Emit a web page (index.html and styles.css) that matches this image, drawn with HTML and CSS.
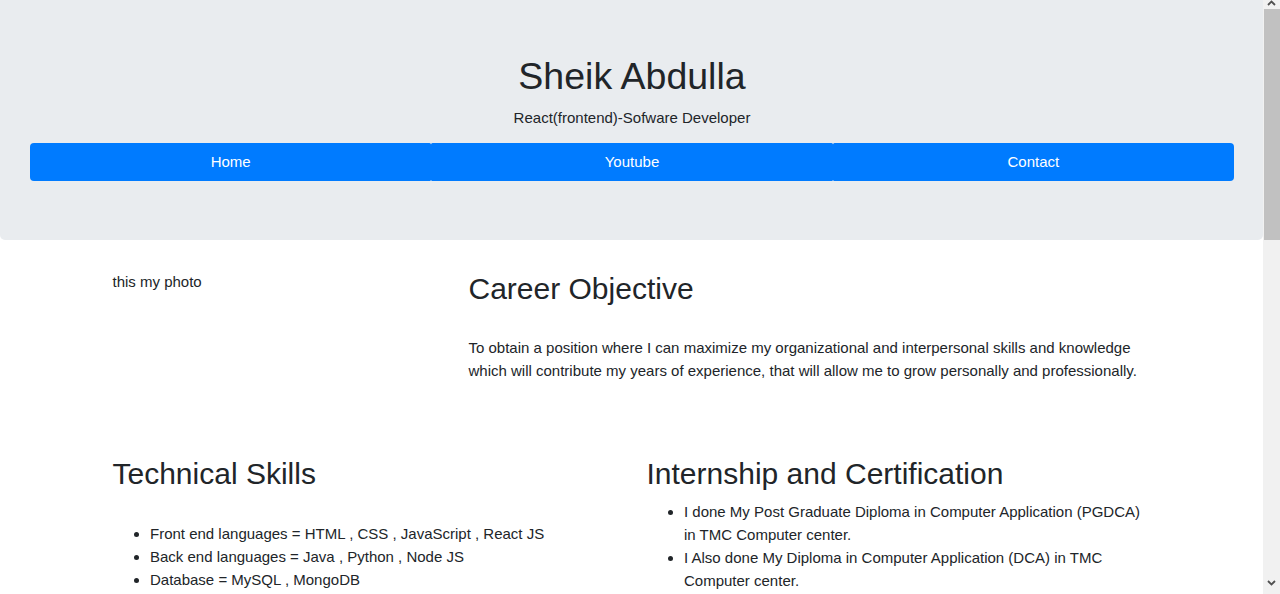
FILE: index.html
```html
<!DOCTYPE html>
<html lang="en">
<head>
<meta charset="utf-8">
<title>Sheik Abdulla</title>
<link rel="stylesheet" href="styles.css">
</head>
<body>
<div class="page">
  <header class="jumbotron">
    <h1 class="name">Sheik Abdulla</h1>
    <p class="role">React(frontend)-Sofware Developer</p>
    <nav class="btn-group">
      <a class="btn" href="#">Home</a>
      <a class="btn" href="#">Youtube</a>
      <a class="btn" href="#">Contact</a>
    </nav>
  </header>

  <section class="row row-top">
    <div class="col col-4">
      <p class="photo">this my photo</p>
    </div>
    <div class="col col-8">
      <h2>Career Objective</h2>
      <br>
      <p>To obtain a position where I can maximize my organizational and interpersonal skills and knowledge which will contribute my years of experience, that will allow me to grow personally and professionally.</p>
    </div>
  </section>

  <section class="row row-bottom">
    <div class="col col-6">
      <h2>Technical Skills</h2>
      <br>
      <ul>
        <li>Front end languages = HTML , CSS , JavaScript , React JS</li>
        <li>Back end languages = Java , Python , Node JS</li>
        <li>Database = MySQL , MongoDB</li>
      </ul>
    </div>
    <div class="col col-6">
      <h2>Internship and Certification</h2>
      <ul>
        <li>I done My Post Graduate Diploma in Computer Application (PGDCA) in TMC Computer center.</li>
        <li>I Also done My Diploma in Computer Application (DCA) in TMC Computer center.</li>
      </ul>
    </div>
  </section>
</div>
<aside class="scrollbar">
  <div class="sb-btn sb-up">
    <svg width="9" height="6" viewBox="0 0 9 6"><path d="M1 5 L4.5 1.5 L8 5" fill="none" stroke="#505050" stroke-width="1.8"/></svg>
  </div>
  <div class="sb-thumb"></div>
  <div class="sb-track"></div>
  <div class="sb-btn sb-down">
    <svg width="9" height="6" viewBox="0 0 9 6"><path d="M1 1 L4.5 4.5 L8 1" fill="none" stroke="#505050" stroke-width="1.8"/></svg>
  </div>
</aside>
</body>
</html>
```

FILE: styles.css
```css
* { box-sizing: border-box; }

html, body {
  margin: 0;
  height: 594px;
  overflow: hidden;
}

body {
  display: flex;
  font-family: "Liberation Sans", Arial, sans-serif;
  font-size: 15px;
  line-height: 22.5px;
  color: #212529;
  background: #fff;
}

.page {
  flex: 1;
  min-width: 0;
  overflow: hidden;
}

.jumbotron {
  background: #e9ecef;
  height: 240px;
  padding: 54px 29px 0 30px;
  border-radius: 0 0 5px 5px;
  text-align: center;
}

.name {
  margin: 0 0 7.5px;
  font-size: 37.5px;
  line-height: 45px;
  font-weight: 400;
}

.role {
  margin: 0 0 14px;
}

.btn-group {
  display: flex;
}

.btn {
  flex: 1;
  display: block;
  height: 38px;
  line-height: 38px;
  background: #007bff;
  color: #fff;
  text-decoration: none;
  font-size: 15px;
  border-radius: 1.5px;
}

.btn:first-child { border-radius: 4px 1.5px 1.5px 4px; }
.btn:last-child { border-radius: 1.5px 4px 4px 1.5px; }

.row {
  display: flex;
  width: 1068px;
  margin-left: 97.5px;
}

.row-top { margin-top: 31px; }
.row-bottom { margin-top: 59px; }

.col { padding: 0 15px; }
.col-4 { width: 356px; }
.col-8 { width: 712px; }
.col-6 { width: 534px; }

h2 {
  margin: 0 0 7.5px;
  font-size: 30px;
  line-height: 36px;
  font-weight: 400;
}

p {
  margin: 0 0 15px;
}

.photo { margin: 0; }

ul {
  margin: 0;
  padding-left: 37.5px;
}

li { line-height: 23px; }

.scrollbar {
  width: 17px;
  height: 594px;
  flex: none;
  display: flex;
  flex-direction: column;
  background: #f1f1f1;
}

.sb-btn {
  display: flex;
  justify-content: center;
}

.sb-up {
  height: 9px;
  align-items: flex-start;
}

.sb-down {
  height: 12px;
  align-items: flex-start;
  margin-bottom: 2px;
}

.sb-thumb {
  height: 231px;
  margin-left: 1px;
  background: #c1c1c1;
}

.sb-track {
  flex: 1;
}
```
